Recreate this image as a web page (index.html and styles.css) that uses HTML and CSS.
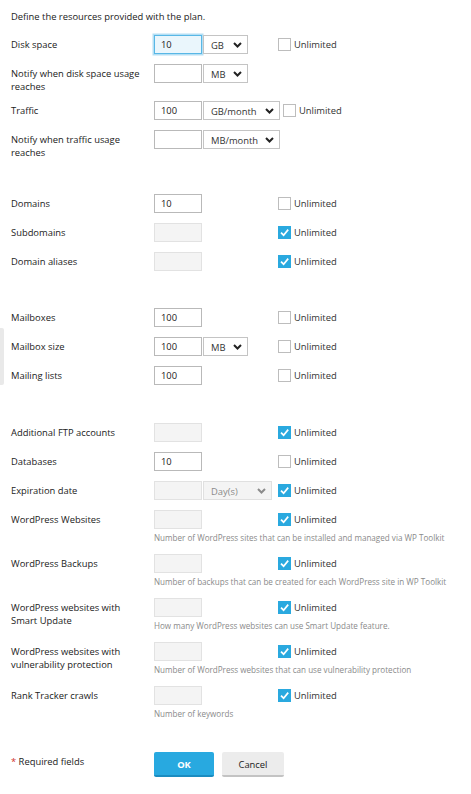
FILE: index.html
```html
<!DOCTYPE html>
<html lang="en">
<head>
<meta charset="utf-8">
<title>Resources</title>
<link rel="stylesheet" href="styles.css">
</head>
<body>
<div class="side-handle"></div>
<div class="page">
  <p class="intro">Define the resources provided with the plan.</p>

  <div class="group">
    <div class="row">
      <div class="label">Disk space</div>
      <div class="field">
        <div class="line">
          <div class="ctrls"><span class="input focused">10</span><span class="select s-unit">GB<svg class="chev" viewBox="0 0 9 6"><path d="M1 1L4.5 4.5L8 1"/></svg></span></div>
          <span class="cb"><span class="box"></span>Unlimited</span>
        </div>
      </div>
    </div>
    <div class="row">
      <div class="label">Notify when disk space usage reaches</div>
      <div class="field">
        <div class="line">
          <div class="ctrls"><span class="input"></span><span class="select s-unit">MB<svg class="chev" viewBox="0 0 9 6"><path d="M1 1L4.5 4.5L8 1"/></svg></span></div>
        </div>
      </div>
    </div>
    <div class="row">
      <div class="label">Traffic</div>
      <div class="field">
        <div class="line">
          <div class="ctrls"><span class="input">100</span><span class="select s-month">GB/month<svg class="chev" viewBox="0 0 9 6"><path d="M1 1L4.5 4.5L8 1"/></svg></span></div>
          <span class="cb"><span class="box"></span>Unlimited</span>
        </div>
      </div>
    </div>
    <div class="row">
      <div class="label">Notify when traffic usage reaches</div>
      <div class="field">
        <div class="line">
          <div class="ctrls"><span class="input"></span><span class="select s-month">MB/month<svg class="chev" viewBox="0 0 9 6"><path d="M1 1L4.5 4.5L8 1"/></svg></span></div>
        </div>
      </div>
    </div>
  </div>

  <div class="group">
    <div class="row">
      <div class="label">Domains</div>
      <div class="field"><div class="line"><div class="ctrls"><span class="input">10</span></div><span class="cb"><span class="box"></span>Unlimited</span></div></div>
    </div>
    <div class="row">
      <div class="label">Subdomains</div>
      <div class="field"><div class="line"><div class="ctrls"><span class="input disabled"></span></div><span class="cb"><span class="box checked"><svg viewBox="0 0 13 13"><path d="M3 6.6L5.6 9.2L10.2 3.6"/></svg></span>Unlimited</span></div></div>
    </div>
    <div class="row">
      <div class="label">Domain aliases</div>
      <div class="field"><div class="line"><div class="ctrls"><span class="input disabled"></span></div><span class="cb"><span class="box checked"><svg viewBox="0 0 13 13"><path d="M3 6.6L5.6 9.2L10.2 3.6"/></svg></span>Unlimited</span></div></div>
    </div>
  </div>

  <div class="group">
    <div class="row">
      <div class="label">Mailboxes</div>
      <div class="field"><div class="line"><div class="ctrls"><span class="input">100</span></div><span class="cb"><span class="box"></span>Unlimited</span></div></div>
    </div>
    <div class="row">
      <div class="label">Mailbox size</div>
      <div class="field"><div class="line"><div class="ctrls"><span class="input">100</span><span class="select s-unit">MB<svg class="chev" viewBox="0 0 9 6"><path d="M1 1L4.5 4.5L8 1"/></svg></span></div><span class="cb"><span class="box"></span>Unlimited</span></div></div>
    </div>
    <div class="row">
      <div class="label">Mailing lists</div>
      <div class="field"><div class="line"><div class="ctrls"><span class="input">100</span></div><span class="cb"><span class="box"></span>Unlimited</span></div></div>
    </div>
  </div>

  <div class="group group-wide">
    <div class="row">
      <div class="label">Additional FTP accounts</div>
      <div class="field"><div class="line"><div class="ctrls"><span class="input disabled"></span></div><span class="cb"><span class="box checked"><svg viewBox="0 0 13 13"><path d="M3 6.6L5.6 9.2L10.2 3.6"/></svg></span>Unlimited</span></div></div>
    </div>
    <div class="row">
      <div class="label">Databases</div>
      <div class="field"><div class="line"><div class="ctrls"><span class="input">10</span></div><span class="cb"><span class="box"></span>Unlimited</span></div></div>
    </div>
    <div class="row">
      <div class="label">Expiration date</div>
      <div class="field"><div class="line"><div class="ctrls"><span class="input disabled"></span><span class="select s-day disabled">Day(s)<svg class="chev" viewBox="0 0 9 6"><path d="M1 1L4.5 4.5L8 1"/></svg></span></div><span class="cb"><span class="box checked"><svg viewBox="0 0 13 13"><path d="M3 6.6L5.6 9.2L10.2 3.6"/></svg></span>Unlimited</span></div></div>
    </div>
    <div class="row">
      <div class="label">WordPress Websites</div>
      <div class="field">
        <div class="line"><div class="ctrls"><span class="input disabled"></span></div><span class="cb"><span class="box checked"><svg viewBox="0 0 13 13"><path d="M3 6.6L5.6 9.2L10.2 3.6"/></svg></span>Unlimited</span></div>
        <div class="desc">Number of WordPress sites that can be installed and managed via WP Toolkit</div>
      </div>
    </div>
    <div class="row">
      <div class="label">WordPress Backups</div>
      <div class="field">
        <div class="line"><div class="ctrls"><span class="input disabled"></span></div><span class="cb"><span class="box checked"><svg viewBox="0 0 13 13"><path d="M3 6.6L5.6 9.2L10.2 3.6"/></svg></span>Unlimited</span></div>
        <div class="desc">Number of backups that can be created for each WordPress site in WP Toolkit</div>
      </div>
    </div>
    <div class="row">
      <div class="label">WordPress websites with Smart Update</div>
      <div class="field">
        <div class="line"><div class="ctrls"><span class="input disabled"></span></div><span class="cb"><span class="box checked"><svg viewBox="0 0 13 13"><path d="M3 6.6L5.6 9.2L10.2 3.6"/></svg></span>Unlimited</span></div>
        <div class="desc">How many WordPress websites can use Smart Update feature.</div>
      </div>
    </div>
    <div class="row">
      <div class="label">WordPress websites with vulnerability protection</div>
      <div class="field">
        <div class="line"><div class="ctrls"><span class="input disabled"></span></div><span class="cb"><span class="box checked"><svg viewBox="0 0 13 13"><path d="M3 6.6L5.6 9.2L10.2 3.6"/></svg></span>Unlimited</span></div>
        <div class="desc">Number of WordPress websites that can use vulnerability protection</div>
      </div>
    </div>
    <div class="row">
      <div class="label">Rank Tracker crawls</div>
      <div class="field">
        <div class="line"><div class="ctrls"><span class="input disabled"></span></div><span class="cb"><span class="box checked"><svg viewBox="0 0 13 13"><path d="M3 6.6L5.6 9.2L10.2 3.6"/></svg></span>Unlimited</span></div>
        <div class="desc">Number of keywords</div>
      </div>
    </div>
  </div>

  <div class="footer">
    <div class="label"><span class="req">*</span> Required fields</div>
    <div class="buttons">
      <button class="btn btn-primary">OK</button>
      <button class="btn">Cancel</button>
    </div>
  </div>
</div>
</body>
</html>
```

FILE: styles.css
```css
* { box-sizing: border-box; }

html, body {
  margin: 0;
  padding: 0;
  background: #fff;
}

body {
  font-family: "Open Sans", "Noto Sans", sans-serif;
  font-size: 9.4px;
  line-height: 13px;
  color: #222;
}

.side-handle {
  position: absolute;
  left: 0;
  top: 328px;
  width: 4px;
  height: 57px;
  background: #e9e9e9;
  border-radius: 0 2px 2px 0;
}

.page {
  padding: 10px 0 0 11px;
  display: flex;
  flex-direction: column;
}

.intro {
  margin: 0 0 12px;
}

.group {
  display: flex;
  flex-direction: column;
  gap: 10px;
}

.group + .group {
  margin-top: 37px;
}

.group + .group-wide {
  margin-top: 38px;
}

.row {
  display: flex;
  align-items: flex-start;
}

.label {
  width: 143px;
  flex: none;
  padding: 3px 10px 0 0;
  margin-bottom: -2px;
}

.field {
  display: flex;
  flex-direction: column;
}

.line {
  display: flex;
  align-items: center;
  height: 19px;
}

.ctrls {
  display: flex;
  gap: 1px;
  min-width: 121px;
}

.input {
  display: block;
  width: 48px;
  height: 19px;
  border: 1px solid #b9b9b9;
  background: #fff;
  padding: 2px 6px 0;
  color: #222;
}

.input.focused {
  border-color: #58b7e6;
  background: #eaf6fc;
  box-shadow: 0 0 0 1.5px rgba(88, 183, 230, 0.45);
}

.input.disabled {
  border-color: #e2e2e2;
  background: #f4f4f4;
}

.select {
  display: flex;
  align-items: center;
  justify-content: space-between;
  height: 19px;
  border: 1px solid #c4c4c4;
  background: #fff;
  padding: 1px 5px 0 7px;
  color: #333;
}

.select.s-unit { width: 45px; }
.select.s-month { width: 77px; }
.select.s-day { width: 69px; }

.select.disabled {
  border-color: #e0e0e0;
  background: #f4f4f4;
  color: #8a8a8a;
}

.chev {
  width: 9px;
  height: 6px;
  margin-top: -1px;
  flex: none;
}

.chev path {
  fill: none;
  stroke: #222;
  stroke-width: 2;
}

.select.disabled .chev path {
  stroke: #8c8c8c;
}

.cb {
  display: flex;
  align-items: center;
  gap: 3px;
  margin-left: 3px;
  color: #333;
}

.box {
  width: 13px;
  height: 13px;
  border: 1px solid #bdbdbd;
  background: #fff;
  display: block;
}

.box.checked {
  border: none;
  background: #2aa9df;
}

.box svg {
  display: block;
  width: 13px;
  height: 13px;
}

.box svg path {
  fill: none;
  stroke: #fff;
  stroke-width: 1.7;
}

.desc {
  margin-top: 2px;
  font-size: 8.1px;
  line-height: 13px;
  color: #8a8a8a;
  white-space: nowrap;
}

.footer {
  display: flex;
  align-items: flex-start;
  margin-top: 32px;
}

.req {
  color: #d0312d;
}

.buttons {
  display: flex;
  gap: 8px;
}

.btn {
  font-family: inherit;
  font-size: 9.4px;
  height: 25px;
  border: none;
  border-bottom: 2px solid #c3c3c3;
  border-radius: 2px;
  background: #ececec;
  color: #222;
  width: 62px;
  padding: 1px 0 0;
  margin: 0;
}

.btn-primary {
  width: 60px;
  background: #28a9e0;
  border-bottom-color: #1b8cc0;
  color: #fff;
  font-weight: 700;
}
```
